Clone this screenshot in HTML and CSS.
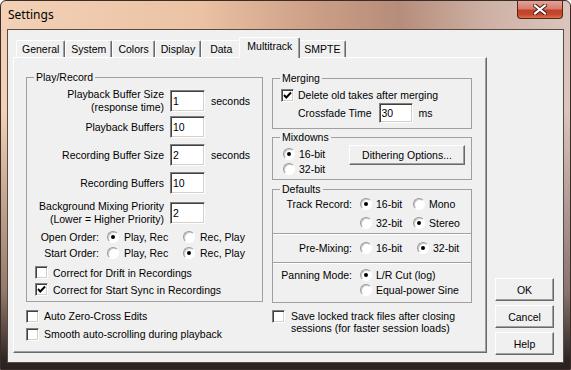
FILE: index.html
```html
<!DOCTYPE html>
<html lang="en">
<head>
    <meta charset="UTF-8">
    <title>Settings</title>
    <link rel="stylesheet" href="styles.css">
</head>
<body>
    <div class="window">
        <div class="titlebar">
            <span class="title">Settings</span>
            <button class="close-btn">
                <svg width="14" height="11" viewBox="0 0 14 11">
                    <path d="M2 1.5 L12 9.5 M12 1.5 L2 9.5" stroke="#3a1a14" stroke-width="4" stroke-linecap="square"/>
                    <path d="M2 1.5 L12 9.5 M12 1.5 L2 9.5" stroke="#fff" stroke-width="2.2" stroke-linecap="square"/>
                </svg>
            </button>
        </div>

        <div class="client">
            <div class="tab-control">
                <ul class="tabs">
                    <li>General</li>
                    <li>System</li>
                    <li>Colors</li>
                    <li>Display</li>
                    <li class="data-tab">Data</li>
                    <li class="active">Multitrack</li>
                    <li>SMPTE</li>
                </ul>

                <div class="tab-panel">
                    <!-- left column -->
                    <div class="col-left">
                        <fieldset class="group play-record">
                            <legend>Play/Record</legend>
                            <div class="field-row">
                                <label class="field-label">Playback Buffer Size<br>(response time)</label>
                                <input class="edit" type="text" value="1">
                                <span class="unit">seconds</span>
                            </div>
                            <div class="field-row">
                                <label class="field-label">Playback Buffers</label>
                                <input class="edit" type="text" value="10">
                            </div>
                            <div class="field-row">
                                <label class="field-label">Recording Buffer Size</label>
                                <input class="edit" type="text" value="2">
                                <span class="unit">seconds</span>
                            </div>
                            <div class="field-row">
                                <label class="field-label">Recording Buffers</label>
                                <input class="edit" type="text" value="10">
                            </div>
                            <div class="field-row">
                                <label class="field-label">Background Mixing Priority<br>(Lower = Higher Priority)</label>
                                <input class="edit" type="text" value="2">
                            </div>

                            <div class="order-row first">
                                <span class="order-label">Open Order:</span>
                                <span class="opt"><span class="radio on"></span>Play, Rec</span>
                                <span class="opt"><span class="radio"></span>Rec, Play</span>
                            </div>
                            <div class="order-row">
                                <span class="order-label">Start Order:</span>
                                <span class="opt"><span class="radio"></span>Play, Rec</span>
                                <span class="opt"><span class="radio on"></span>Rec, Play</span>
                            </div>

                            <div class="check-row inner first">
                                <span class="check"></span>Correct for Drift in Recordings
                            </div>
                            <div class="check-row inner">
                                <span class="check on"><svg viewBox="0 0 11 11"><path d="M2 5 L4.3 7.5 L9 2.5" fill="none" stroke="#000" stroke-width="1.9"/></svg></span>Correct for Start Sync in Recordings
                            </div>
                        </fieldset>

                        <div class="check-row outer first">
                            <span class="check"></span>Auto Zero-Cross Edits
                        </div>
                        <div class="check-row outer">
                            <span class="check"></span>Smooth auto-scrolling during playback
                        </div>
                    </div>

                    <!-- right column -->
                    <div class="col-right">
                        <fieldset class="group merging">
                            <legend>Merging</legend>
                            <div class="check-row merge-check">
                                <span class="check on"><svg viewBox="0 0 11 11"><path d="M2 5 L4.3 7.5 L9 2.5" fill="none" stroke="#000" stroke-width="1.9"/></svg></span>Delete old takes after merging
                            </div>
                            <div class="crossfade-row">
                                <span>Crossfade Time</span>
                                <input class="edit small" type="text" value="30">
                                <span>ms</span>
                            </div>
                        </fieldset>

                        <fieldset class="group mixdowns">
                            <legend>Mixdowns</legend>
                            <div class="mix-body">
                                <div class="mix-radios">
                                    <div class="mix-opt"><span class="radio on"></span>16-bit</div>
                                    <div class="mix-opt"><span class="radio"></span>32-bit</div>
                                </div>
                                <button class="btn dither-btn">Dithering Options...</button>
                            </div>
                        </fieldset>

                        <fieldset class="group defaults">
                            <legend>Defaults</legend>
                            <div class="def-row">
                                <span class="def-label">Track Record:</span>
                                <span class="opt narrow"><span class="radio on"></span>16-bit</span>
                                <span class="opt"><span class="radio"></span>Mono</span>
                            </div>
                            <div class="def-row second">
                                <span class="def-label"></span>
                                <span class="opt narrow"><span class="radio"></span>32-bit</span>
                                <span class="opt"><span class="radio on"></span>Stereo</span>
                            </div>
                            <div class="separator sep-1"></div>
                            <div class="def-row premix">
                                <span class="def-label">Pre-Mixing:</span>
                                <span class="opt wide"><span class="radio"></span>16-bit</span>
                                <span class="opt"><span class="radio on"></span>32-bit</span>
                            </div>
                            <div class="separator sep-2"></div>
                            <div class="def-row pan first">
                                <span class="def-label">Panning Mode:</span>
                                <span class="opt"><span class="radio on"></span>L/R Cut (log)</span>
                            </div>
                            <div class="def-row pan">
                                <span class="def-label"></span>
                                <span class="opt"><span class="radio"></span>Equal-power Sine</span>
                            </div>
                        </fieldset>

                        <div class="check-row save-row">
                            <span class="check"></span>
                            <span>Save locked track files after closing<br>sessions (for faster session loads)</span>
                        </div>
                    </div>
                </div>
            </div>

            <div class="dialog-buttons">
                <button class="btn">OK</button>
                <button class="btn">Cancel</button>
                <button class="btn">Help</button>
            </div>
        </div>
    </div>
</body>
</html>
```

FILE: styles.css
```css
/* Settings dialog */
html, body {
    margin: 0;
    padding: 0;
    background: #fff;
}

body {
    font-family: "Liberation Sans", Arial, sans-serif;
    font-size: 10.5px;
    color: #000;
}

/* Window frame */
.window {
    box-sizing: border-box;
    width: 571px;
    height: 370px;
    border: 1px solid #3b2c27;
    border-radius: 6px 6px 0 0;
    overflow: hidden;
    display: flex;
    flex-direction: column;
    background:
        linear-gradient(180deg, rgba(0,0,0,0) 0, rgba(0,0,0,0) 110px, rgba(70,50,44,0.55) 290px, #2b2321 362px),
        linear-gradient(90deg, #f2d1b6 0%, #ebc2a4 35%, #cc9f86 55%, #b68d7b 70%, #cdb0a3 85%, #dac6bd 100%);
}

.titlebar {
    height: 28px;
    display: flex;
    align-items: flex-start;
    justify-content: space-between;
    padding-left: 7px;
}

.title {
    font-family: "Noto Sans", sans-serif;
    font-size: 12px;
    line-height: 28px;
    color: #000;
}

.close-btn {
    width: 46px;
    height: 18px;
    margin-right: 7px;
    padding: 0;
    border: 1px solid #5a2418;
    border-top: none;
    border-radius: 0 0 4px 4px;
    background: linear-gradient(180deg, #e2a396 0%, #d57e6d 45%, #c2402a 55%, #c8492e 80%, #d9744a 100%);
    display: flex;
    align-items: center;
    justify-content: center;
}

.client {
    flex: 1;
    margin: 0 6px 6px;
    background: #f0f0f0;
    border: 1px solid #5a4a44;
    display: flex;
    align-items: flex-end;
    padding: 7px 0 9px 5px;
}

/* Tabs */
.tab-control {
    width: 474px;
}

.tabs {
    list-style: none;
    margin: 0;
    padding: 0 0 0 3px;
    height: 20px;
    display: flex;
    align-items: flex-end;
}

.tabs li {
    box-sizing: border-box;
    height: 17px;
    line-height: 16px;
    padding: 0 5px;
    border-top: 1px solid #fff;
    border-left: 1px solid #fff;
    border-right: 1px solid #696969;
    border-radius: 2px 2px 0 0;
    box-shadow: inset -1px 0 #a0a0a0;
    white-space: nowrap;
}

.tabs li.data-tab {
    padding: 0 8px;
}

.tabs li.active {
    position: relative;
    z-index: 1;
    height: 21px;
    line-height: 17px;
    margin: 0 -2px -1px;
    padding: 0 7px;
    background: #f0f0f0;
}

.tab-panel {
    box-sizing: border-box;
    height: 296px;
    border: 1px solid;
    border-color: #fff #696969 #696969 #fff;
    box-shadow: inset -1px -1px #a0a0a0;
    display: flex;
    gap: 9px;
    padding: 12px 0 0 12px;
}

.col-left {
    width: 237px;
}

.col-right {
    width: 200px;
    margin-top: 1px;
}

/* Group boxes */
.group {
    margin: 0;
    padding: 0;
    min-width: 0;
    border: 1px solid #a0a0a0;
}

.group legend {
    margin-left: 7px;
    padding: 0 2px;
    line-height: 14px;
}

.play-record {
    padding: 4px 0 3px;
}

/* Edit boxes */
.edit {
    box-sizing: border-box;
    width: 35px;
    height: 22px;
    margin: 0;
    padding: 0 2px;
    font-family: inherit;
    font-size: 10.5px;
    background: #fff;
    border: 1px solid;
    border-color: #808080 #fff #fff #808080;
    box-shadow: inset 1px 1px #404040, inset -1px -1px #d4d0c8;
    outline: none;
}

.edit.small {
    width: 34px;
    height: 20px;
    margin: 0 6px 0 7px;
}

.field-row {
    display: grid;
    grid-template-columns: 137px 35px auto;
    column-gap: 6px;
    align-items: center;
    height: 22px;
}

.field-row + .field-row {
    margin-top: 6px;
}

.field-label {
    text-align: right;
    line-height: 13px;
}

/* Radio buttons */
.radio {
    box-sizing: border-box;
    display: inline-block;
    position: relative;
    width: 12px;
    height: 12px;
    border-radius: 50%;
    background: #fff;
    border: 1px solid;
    border-color: #9a9a9a #fff #fff #9a9a9a;
    box-shadow: inset 1px 1px #c8c8c8;
    flex: none;
}

.radio.on::after {
    content: "";
    position: absolute;
    left: 3px;
    top: 3px;
    width: 4px;
    height: 4px;
    border-radius: 50%;
    background: #000;
}

.order-row {
    display: flex;
    align-items: center;
    height: 16px;
}

.order-row.first {
    margin-top: 7px;
}

.order-label {
    width: 72px;
    margin-right: 8px;
    text-align: right;
}

.opt {
    display: flex;
    align-items: center;
    width: 76px;
    white-space: nowrap;
}

.opt .radio {
    margin-right: 5px;
}

/* Checkboxes */
.check {
    box-sizing: border-box;
    display: inline-block;
    width: 13px;
    height: 13px;
    background: #fff;
    border: 1px solid;
    border-color: #808080 #fff #fff #808080;
    box-shadow: inset 1px 1px #404040, inset -1px -1px #d4d0c8;
    margin-right: 5px;
    flex: none;
    position: relative;
}

.check svg {
    position: absolute;
    left: 0;
    top: 0;
    width: 11px;
    height: 11px;
}

.check-row {
    display: flex;
    align-items: center;
    white-space: nowrap;
}

.check-row.inner {
    height: 17px;
    padding-left: 8px;
}

.check-row.inner.first {
    margin-top: 3px;
}

.check-row.outer {
    height: 18px;
}

.check-row.outer.first {
    margin-top: 5px;
}

/* Merging */
.merging {
    padding: 2px 0 5px;
}

.merge-check {
    height: 16px;
    padding-left: 8px;
}

.merge-check .check {
    margin-right: 4px;
}

.crossfade-row {
    display: flex;
    align-items: center;
    height: 20px;
    padding-left: 25px;
}

/* Mixdowns */
.mixdowns {
    margin-top: 1px;
    padding: 2px 0 3px;
}

.mix-body {
    display: flex;
    align-items: flex-start;
}

.mix-radios {
    box-sizing: border-box;
    width: 76px;
    padding-left: 10px;
}

.mix-opt {
    display: flex;
    align-items: center;
    height: 15px;
}

.mix-opt .radio {
    margin-right: 4px;
}

/* Buttons */
.btn {
    box-sizing: border-box;
    margin: 0;
    padding: 0;
    font-family: inherit;
    font-size: 10.5px;
    color: #000;
    background: #f0f0f0;
    border: 1px solid;
    border-color: #fff #696969 #696969 #fff;
    box-shadow: inset -1px -1px #a0a0a0;
}

.dither-btn {
    width: 116px;
    height: 20px;
    margin-top: -1px;
}

.dialog-buttons {
    display: flex;
    flex-direction: column;
    gap: 4px;
    margin-left: 8px;
    margin-bottom: -2px;
}

.dialog-buttons .btn {
    width: 59px;
    height: 23px;
}

/* Defaults */
.defaults {
    margin-top: 2px;
    padding: 0 0 5px;
}

.def-row {
    display: flex;
    align-items: center;
    height: 16px;
}

.def-row.second {
    margin-top: 3px;
}

.def-row.premix {
    margin-top: 5px;
}

.def-row.pan {
    height: 15px;
}

.def-row.pan.first {
    margin-top: 3px;
}

.def-label {
    width: 79px;
    margin-right: 8px;
    text-align: right;
    flex: none;
}

.def-row .opt {
    width: auto;
}

.def-row .opt.narrow {
    width: 53px;
}

.def-row .opt.wide {
    width: 57px;
}

.def-row .radio {
    margin-right: 4px;
}

.separator {
    border-top: 1px solid #a0a0a0;
    border-bottom: 1px solid #fff;
}

.sep-1 {
    margin-top: 2px;
}

.sep-2 {
    margin-top: 6px;
}

.save-row {
    align-items: flex-start;
    margin-top: 7px;
    line-height: 12px;
}

.save-row .check {
    margin-right: 6px;
}
```
